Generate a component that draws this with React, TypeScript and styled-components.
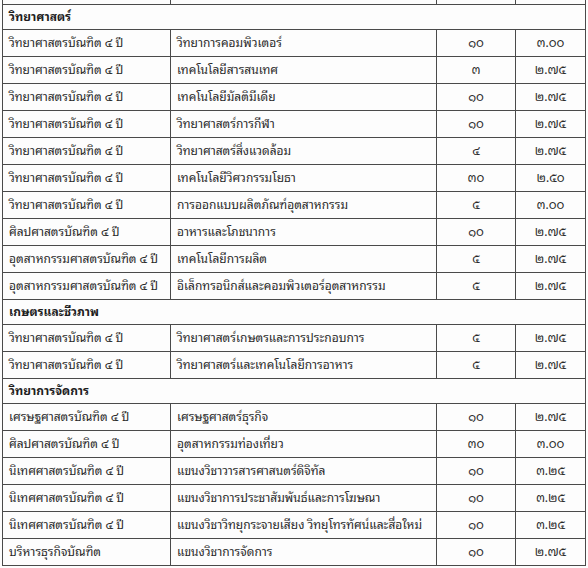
import { Fragment } from 'react';
import styled, { createGlobalStyle } from 'styled-components';

const GlobalStyle = createGlobalStyle`
  html, body {
    margin: 0;
    padding: 0;
    background: #fdfdfd;
  }
  body {
    font-family: 'Noto Sans Thai Looped', 'Loma', 'Garuda', 'Tahoma', 'Noto Sans Thai', 'Noto Sans', sans-serif;
    color: #2a2a2a;
  }
`;

const Page = styled.div`
  width: 588px;
  height: 568px;
  overflow: hidden;
  padding-left: 2px;
  box-sizing: border-box;
`;

const Table = styled.table`
  width: 583px;
  border-collapse: collapse;
  table-layout: fixed;
  font-size: 12px;
`;

const Col = styled.col<{ $w: number }>`
  width: ${(p) => p.$w}px;
`;

const Row = styled.tr<{ $h: number }>`
  height: ${(p) => p.$h}px;
`;

const Cell = styled.td<{ $center?: boolean }>`
  border: 1px solid #4a4a4a;
  padding: 0 6px 1px;
  text-align: ${(p) => (p.$center ? 'center' : 'left')};
  vertical-align: middle;
  white-space: nowrap;
  overflow: hidden;
  line-height: 1;
`;

// bottom of the row above, cut off by the scan
const TailCell = styled(Cell)`
  border-top: none;
  padding: 0;
`;

const GroupCell = styled(Cell)`
  font-weight: bold;
  color: #1e1e1e;
`;

type Program = [string, string, string, string];

interface Group {
  name: string;
  rows: Program[];
}

const SCI = 'วิทยาศาสตรบัณฑิต ๔ ปี';

const groups: Group[] = [
  {
    name: 'วิทยาศาสตร์',
    rows: [
      [SCI, 'วิทยาการคอมพิวเตอร์', '๑๐', '๓.๐๐'],
      [SCI, 'เทคโนโลยีสารสนเทศ', '๓', '๒.๗๕'],
      [SCI, 'เทคโนโลยีมัลติมีเดีย', '๑๐', '๒.๗๕'],
      [SCI, 'วิทยาศาสตร์การกีฬา', '๑๐', '๒.๗๕'],
      [SCI, 'วิทยาศาสตร์สิ่งแวดล้อม', '๔', '๒.๗๕'],
      [SCI, 'เทคโนโลยีวิศวกรรมโยธา', '๓๐', '๒.๕๐'],
      [SCI, 'การออกแบบผลิตภัณฑ์อุตสาหกรรม', '๕', '๓.๐๐'],
      ['ศิลปศาสตรบัณฑิต ๔ ปี', 'อาหารและโภชนาการ', '๑๐', '๒.๗๕'],
      ['อุตสาหกรรมศาสตรบัณฑิต ๔ ปี', 'เทคโนโลยีการผลิต', '๕', '๒.๗๕'],
      ['อุตสาหกรรมศาสตรบัณฑิต ๔ ปี', 'อิเล็กทรอนิกส์และคอมพิวเตอร์อุตสาหกรรม', '๕', '๒.๗๕'],
    ],
  },
  {
    name: 'เกษตรและชีวภาพ',
    rows: [
      [SCI, 'วิทยาศาสตร์เกษตรและการประกอบการ', '๕', '๒.๗๕'],
      [SCI, 'วิทยาศาสตร์และเทคโนโลยีการอาหาร', '๕', '๒.๗๕'],
    ],
  },
  {
    name: 'วิทยาการจัดการ',
    rows: [
      ['เศรษฐศาสตรบัณฑิต ๔ ปี', 'เศรษฐศาสตร์ธุรกิจ', '๑๐', '๒.๗๕'],
      ['ศิลปศาสตรบัณฑิต ๔ ปี', 'อุตสาหกรรมท่องเที่ยว', '๓๐', '๓.๐๐'],
      ['นิเทศศาสตรบัณฑิต ๔ ปี', 'แขนงวิชาวารสารศาสนตร์ดิจิทัล', '๑๐', '๓.๒๕'],
      ['นิเทศศาสตรบัณฑิต ๔ ปี', 'แขนงวิชาการประชาสัมพันธ์และการโฆษณา', '๑๐', '๓.๒๕'],
      ['นิเทศศาสตรบัณฑิต ๔ ปี', 'แขนงวิชาวิทยุกระจายเสียง วิทยุโทรทัศน์และสื่อใหม่', '๑๐', '๓.๒๕'],
      ['บริหารธุรกิจบัณฑิต', 'แขนงวิชาการจัดการ', '๑๐', '๒.๗๕'],
    ],
  },
];

const widths = [168, 266, 79, 70];

export default function App() {
  return (
    <Page>
      <GlobalStyle />
      <Table>
        <colgroup>
          {widths.map((w, i) => (
            <Col key={i} $w={w} />
          ))}
        </colgroup>
        <tbody>
          <Row $h={4}>
            {widths.map((_, i) => (
              <TailCell key={i} />
            ))}
          </Row>
          {groups.map((g) => (
            <Fragment key={g.name}>
              <Row $h={25}>
                <GroupCell colSpan={4}>{g.name}</GroupCell>
              </Row>
              {g.rows.map((r, i) => (
                <Row key={i} $h={27}>
                  <Cell>{r[0]}</Cell>
                  <Cell>{r[1]}</Cell>
                  <Cell $center>{r[2]}</Cell>
                  <Cell $center>{r[3]}</Cell>
                </Row>
              ))}
            </Fragment>
          ))}
        </tbody>
      </Table>
    </Page>
  );
}
